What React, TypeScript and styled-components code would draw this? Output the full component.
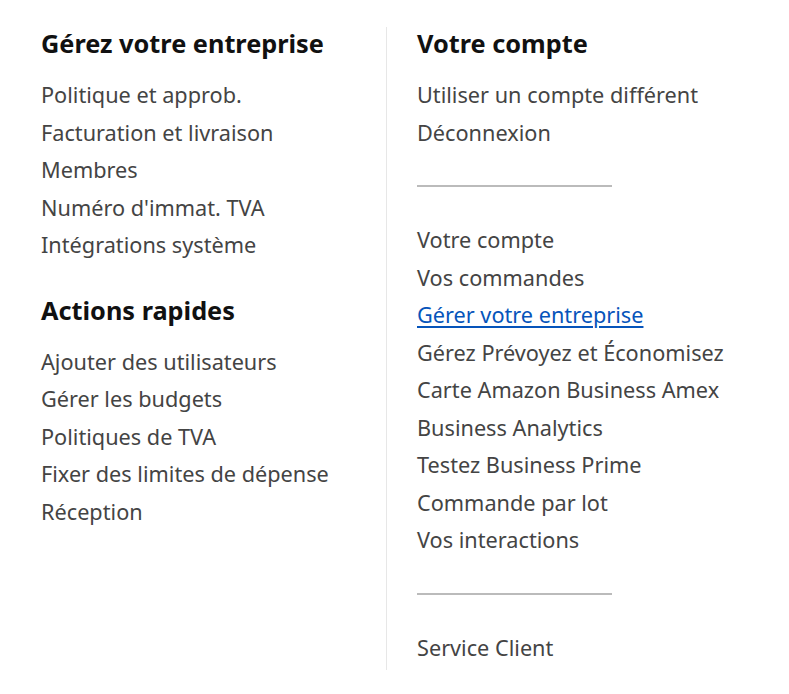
import styled, { createGlobalStyle } from 'styled-components';

const GlobalStyle = createGlobalStyle`
   body {
      margin: 0;
      background: #fff;
      font-family: "Noto Sans", "Open Sans", Arial, sans-serif;
   }
`;

const Flyout = styled.div`
   display: flex;
   padding: 27px 0 0 41px;
   width: 789px;
   height: 694px;
   box-sizing: border-box;
`;

const Column = styled.div<{ divided?: boolean }>`
   display: flex;
   flex-direction: column;
   width: ${({ divided }) => (divided ? 'auto' : '345px')};
   padding-left: ${({ divided }) => (divided ? '30px' : '0')};
   border-left: ${({ divided }) => (divided ? '1px solid #e7e7e7' : 'none')};
   height: 643px;
`;

const Title = styled.h2<{ spaced?: boolean }>`
   margin: ${({ spaced }) => (spaced ? '30px' : '0')} 0 16px;
   font-size: 25.3px;
   line-height: 33px;
   font-weight: 700;
   color: #111;
   white-space: nowrap;
`;

const List = styled.ul`
   list-style: none;
   margin: 0;
   padding: 0;
`;

const Item = styled.li`
   font-size: 21.7px;
   line-height: 37.5px;
   color: #444;
   white-space: nowrap;
`;

const Link = styled.a<{ active?: boolean }>`
   color: ${({ active }) => (active ? '#0654ba' : 'inherit')};
   text-decoration: ${({ active }) => (active ? 'underline' : 'none')};
   text-underline-offset: 3px;
   cursor: pointer;
`;

const Rule = styled.hr`
   width: 195px;
   margin: 34px 0 34px;
   border: none;
   border-top: 2px solid #bbb;
`;

const business = ['Politique et approb.', 'Facturation et livraison', 'Membres', "Numéro d'immat. TVA", 'Intégrations système'];
const actions = ['Ajouter des utilisateurs', 'Gérer les budgets', 'Politiques de TVA', 'Fixer des limites de dépense', 'Réception'];
const account = [
   'Votre compte',
   'Vos commandes',
   'Gérer votre entreprise',
   'Gérez Prévoyez et Économisez',
   'Carte Amazon Business Amex',
   'Business Analytics',
   'Testez Business Prime',
   'Commande par lot',
   'Vos interactions',
];

const Links = ({ items, active }: { items: string[]; active?: string }) => (
   <List>
      {items.map((t) => (
         <Item key={t}>
            <Link active={t === active}>{t}</Link>
         </Item>
      ))}
   </List>
);

export default function App() {
   return (
      <>
         <GlobalStyle />
         <Flyout>
            <Column>
               <Title>Gérez votre entreprise</Title>
               <Links items={business} />
               <Title spaced>Actions rapides</Title>
               <Links items={actions} />
            </Column>
            <Column divided>
               <Title>Votre compte</Title>
               <Links items={['Utiliser un compte différent', 'Déconnexion']} />
               <Rule />
               <Links items={account} active="Gérer votre entreprise" />
               <Rule />
               <Links items={['Service Client']} />
            </Column>
         </Flyout>
      </>
   );
}
